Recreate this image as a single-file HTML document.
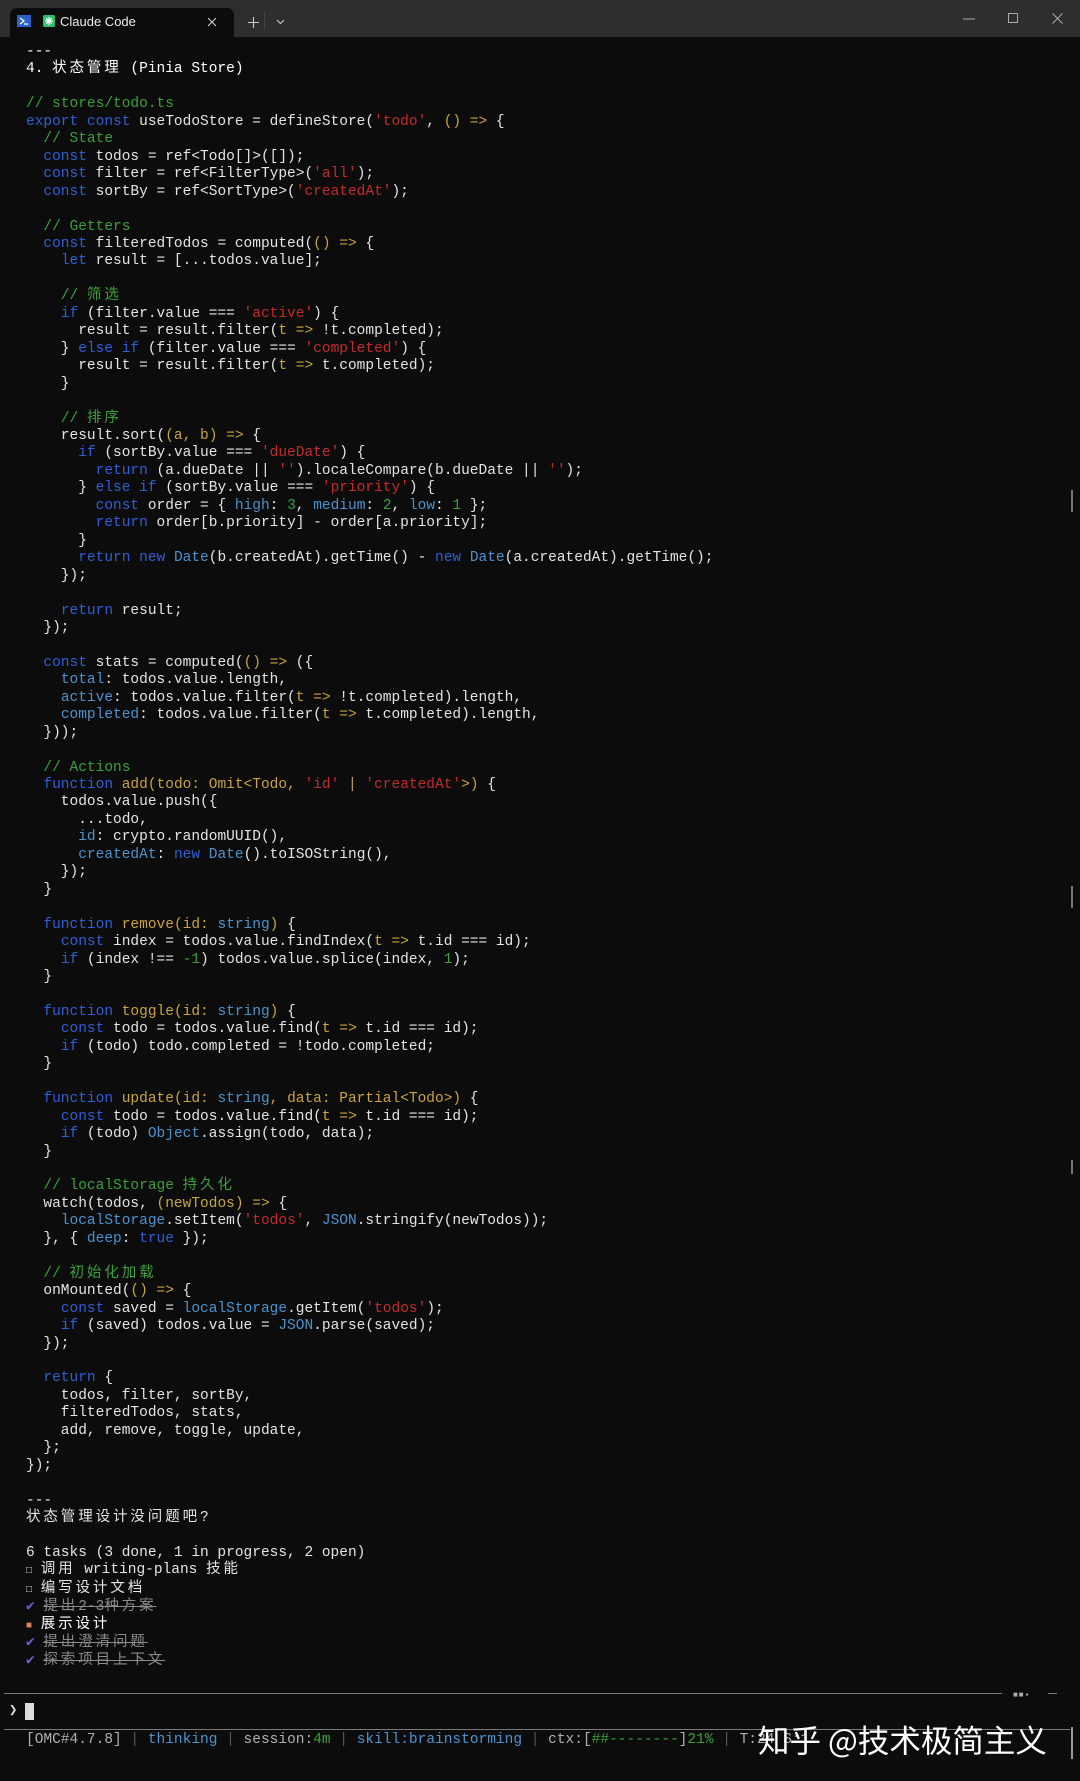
<!DOCTYPE html>
<html><head><meta charset="utf-8"><style>
html,body{margin:0;padding:0;background:#0c0c0c;width:1080px;height:1781px;overflow:hidden}
body{position:relative;font-family:"Liberation Mono","Noto Sans CJK SC",monospace}
.bar{position:absolute;left:0;top:0;width:1080px;height:37px;background:#2e2e2e}
.tab{position:absolute;left:10px;top:8px;width:224px;height:29px;background:#0c0c0c;border-radius:7px 7px 0 0}
.tt{position:absolute;left:60px;top:14px;color:#eee;font:13px "Liberation Sans",sans-serif}
pre{position:absolute;left:26px;top:44px;margin:0;font-size:14.5px;line-height:17.45px;color:#e4e4e4;font-family:"Liberation Mono","Noto Sans CJK SC",monospace}
.c{letter-spacing:2.9px}
.k{color:#2f5fd6}.p{color:#4b93cf}.y{color:#c9a53a}.s{color:#c42a2a}.g{color:#3aa03a}.n{color:#3aa03a}
.w{color:#fff}
.d{color:#8a8a8a;text-decoration:line-through}
.ck{color:#7b5bd8;display:inline-block;width:17.4px}
.og{color:#e0825a}
.sep{color:#555}
.hl{position:absolute;height:1px;background:#7a7a7a}
.wm{position:absolute;left:758px;top:1716px;color:#fff;font:31.5px "Noto Sans CJK SC",sans-serif;white-space:nowrap}
.sb{position:absolute;left:1071px;width:2px;height:22px;background:#777}
</style></head><body>
<div class="bar">
<div class="tab"></div>
<svg style="position:absolute;left:17px;top:15px" width="14" height="12"><rect width="14" height="12" fill="#2a62c8"/><path d="M3 3l4 3-4 3M7 9h4" stroke="#fff" stroke-width="1.3" fill="none"/></svg>
<svg style="position:absolute;left:43px;top:15px" width="12" height="12"><rect width="12" height="12" rx="1.5" fill="#2bbf6a"/><path d="M6 2v8M2 6h8M3 3l6 6M9 3l-6 6" stroke="#fff" stroke-width="1.2"/></svg>
<div class="tt">Claude Code</div>
<svg style="position:absolute;left:207px;top:17px" width="10" height="10"><path d="M1 1l8 8M9 1l-8 8" stroke="#ccc" stroke-width="1.1"/></svg>
<svg style="position:absolute;left:248px;top:17px" width="11" height="11"><path d="M5.5 0v11M0 5.5h11" stroke="#ccc" stroke-width="1.1"/></svg>
<div style="position:absolute;left:264px;top:12px;width:1px;height:18px;background:#444"></div>
<svg style="position:absolute;left:276px;top:19px" width="9" height="6"><path d="M1 1l3.5 3.5L8 1" stroke="#ccc" stroke-width="1.1" fill="none"/></svg>
<svg style="position:absolute;left:963px;top:18px" width="12" height="2"><path d="M0 1h12" stroke="#aaa"/></svg>
<svg style="position:absolute;left:1008px;top:13px" width="11" height="11"><rect x=".5" y=".5" width="9" height="9" stroke="#aaa" fill="none"/></svg>
<svg style="position:absolute;left:1052px;top:13px" width="11" height="11"><path d="M.5 .5l10 10M10.5 .5l-10 10" stroke="#aaa"/></svg>
</div>
<pre><span class="w">---</span>
<span class="w">4. <span class="c">状态管理</span> (Pinia Store)</span>

<span class="g">// stores/todo.ts</span>
<span class="k">export const</span> useTodoStore = defineStore(<span class="s">'todo'</span>, <span class="y">()</span> <span class="y">=&gt;</span> {
  <span class="g">// State</span>
  <span class="k">const</span> todos = ref&lt;Todo[]&gt;([]);
  <span class="k">const</span> filter = ref&lt;FilterType&gt;(<span class="s">'all'</span>);
  <span class="k">const</span> sortBy = ref&lt;SortType&gt;(<span class="s">'createdAt'</span>);

  <span class="g">// Getters</span>
  <span class="k">const</span> filteredTodos = computed(<span class="y">() =&gt;</span> {
    <span class="k">let</span> result = [...todos.value];

    <span class="g">// <span class="c">筛选</span></span>
    <span class="k">if</span> (filter.value === <span class="s">'active'</span>) {
      result = result.filter(<span class="y">t =&gt;</span> !t.completed);
    } <span class="k">else if</span> (filter.value === <span class="s">'completed'</span>) {
      result = result.filter(<span class="y">t =&gt;</span> t.completed);
    }

    <span class="g">// <span class="c">排序</span></span>
    result.sort(<span class="y">(a, b) =&gt;</span> {
      <span class="k">if</span> (sortBy.value === <span class="s">'dueDate'</span>) {
        <span class="k">return</span> (a.dueDate || <span class="s">''</span>).localeCompare(b.dueDate || <span class="s">''</span>);
      } <span class="k">else if</span> (sortBy.value === <span class="s">'priority'</span>) {
        <span class="k">const</span> order = { <span class="p">high</span>: <span class="n">3</span>, <span class="p">medium</span>: <span class="n">2</span>, <span class="p">low</span>: <span class="n">1</span> };
        <span class="k">return</span> order[b.priority] - order[a.priority];
      }
      <span class="k">return new</span> <span class="p">Date</span>(b.createdAt).getTime() - <span class="k">new</span> <span class="p">Date</span>(a.createdAt).getTime();
    });

    <span class="k">return</span> result;
  });

  <span class="k">const</span> stats = computed(<span class="y">() =&gt;</span> ({
    <span class="p">total</span>: todos.value.length,
    <span class="p">active</span>: todos.value.filter(<span class="y">t =&gt;</span> !t.completed).length,
    <span class="p">completed</span>: todos.value.filter(<span class="y">t =&gt;</span> t.completed).length,
  }));

  <span class="g">// Actions</span>
  <span class="k">function</span> <span class="y">add(todo: Omit&lt;Todo,</span> <span class="s">'id'</span> <span class="y">|</span> <span class="s">'createdAt'</span><span class="y">&gt;)</span> {
    todos.value.push({
      ...todo,
      <span class="p">id</span>: crypto.randomUUID(),
      <span class="p">createdAt</span>: <span class="k">new</span> <span class="p">Date</span>().toISOString(),
    });
  }

  <span class="k">function</span> <span class="y">remove(id: </span><span class="p">string</span><span class="y">)</span> {
    <span class="k">const</span> index = todos.value.findIndex(<span class="y">t =&gt;</span> t.id === id);
    <span class="k">if</span> (index !== <span class="n">-1</span>) todos.value.splice(index, <span class="n">1</span>);
  }

  <span class="k">function</span> <span class="y">toggle(id: </span><span class="p">string</span><span class="y">)</span> {
    <span class="k">const</span> todo = todos.value.find(<span class="y">t =&gt;</span> t.id === id);
    <span class="k">if</span> (todo) todo.completed = !todo.completed;
  }

  <span class="k">function</span> <span class="y">update(id: </span><span class="p">string</span><span class="y">, data: Partial&lt;Todo&gt;)</span> {
    <span class="k">const</span> todo = todos.value.find(<span class="y">t =&gt;</span> t.id === id);
    <span class="k">if</span> (todo) <span class="p">Object</span>.assign(todo, data);
  }

  <span class="g">// localStorage <span class="c">持久化</span></span>
  watch(todos, <span class="y">(newTodos) =&gt;</span> {
    <span class="p">localStorage</span>.setItem(<span class="s">'todos'</span>, <span class="p">JSON</span>.stringify(newTodos));
  }, { <span class="p">deep</span>: <span class="k">true</span> });

  <span class="g">// <span class="c">初始化加载</span></span>
  onMounted(<span class="y">() =&gt;</span> {
    <span class="k">const</span> saved = <span class="p">localStorage</span>.getItem(<span class="s">'todos'</span>);
    <span class="k">if</span> (saved) todos.value = <span class="p">JSON</span>.parse(saved);
  });

  <span class="k">return</span> {
    todos, filter, sortBy,
    filteredTodos, stats,
    add, remove, toggle, update,
  };
});

---
<span class="c">状态管理设计没问题吧</span>?

6 tasks (3 done, 1 in progress, 2 open)
<span style="font-size:10px">□</span> <span class="c">调用</span> writing-plans <span class="c">技能</span>
<span style="font-size:10px">□</span> <span class="c">编写设计文档</span>
<span class="ck">✔</span><span class="d"><span class="c">提出</span>2-3<span class="c">种方案</span></span>
<span class="og" style="font-size:10px">■</span> <span class="w c">展示设计</span>
<span class="ck">✔</span><span class="d c">提出澄清问题</span>
<span class="ck">✔</span><span class="d c">探索项目上下文</span></pre>
<div class="hl" style="left:4px;top:1693px;width:998px"></div>
<div style="position:absolute;left:1013px;top:1691px;color:#aaa;font-size:8px;letter-spacing:1px">■■▪</div>
<div class="hl" style="left:1048px;top:1693px;width:9px"></div>
<div style="position:absolute;left:9px;top:1702px;color:#ddd;font-size:14px">❯</div>
<div style="position:absolute;left:25px;top:1703px;width:9px;height:17px;background:#ddd"></div>
<div class="hl" style="left:4px;top:1729px;width:1066px"></div>
<pre style="top:1732px;left:26px;color:#b0b0b0">[OMC#4.7.8] <span class="sep">|</span> <span class="p">thinking</span> <span class="sep">|</span> session:<span class="g">4m</span> <span class="sep">|</span> <span class="p">skill:brainstorming</span> <span class="sep">|</span> ctx:[<span class="g">##--------</span>]<span class="g">21%</span> <span class="sep">|</span> T:24 S:1</pre>
<div class="wm">知乎 @技术极简主义</div>
<div class="sb" style="top:490px"></div>
<div class="sb" style="top:886px"></div>
<div class="sb" style="top:1160px;height:14px"></div>
<div class="sb" style="top:1727px;height:32px;background:#999"></div>
</body></html>
